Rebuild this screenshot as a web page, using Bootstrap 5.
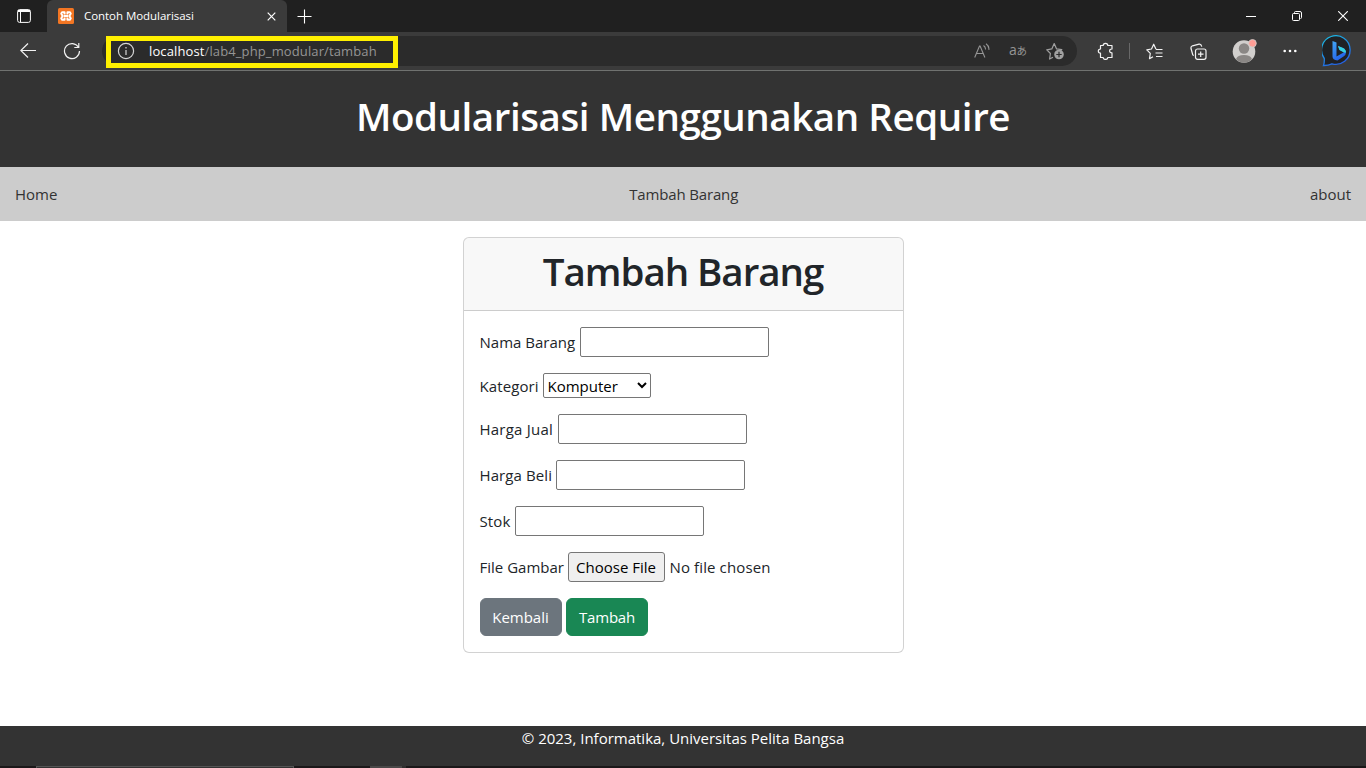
<!DOCTYPE html>
<html lang="id">
<head>
<meta charset="utf-8">
<meta name="viewport" content="width=device-width, initial-scale=1">
<title>Contoh Modularisasi</title>
<link href="https://cdn.jsdelivr.net/npm/bootstrap@5.3.0/dist/css/bootstrap.min.css" rel="stylesheet">
<style>
body{font-family:"Open Sans","Noto Sans",sans-serif;font-size:15px;line-height:24px;height:768px;overflow:hidden;color:#212529}
svg{display:block;flex:none}
.tabstrip{height:32px;background:#202020}
.tab-left{width:47px;padding-left:17px}
.tab-on{width:240px;height:32px;background:#3b3b3b;border-radius:6px 6px 0 0;padding:0 11px;color:#fff;font-size:11.5px}
.tab-title{margin-left:10px;letter-spacing:-.05px}
.tab-add{margin-left:10px}
.win-btns{padding-right:18px;gap:36px}
.toolbar{height:39px;background:#3b3b3b;border-bottom:1px solid #707270}
.ic-back{margin-left:20px}
.ic-reload{margin-left:27px}
.address{width:975px;height:30px;margin-left:21px;background:#2b2b2b;border-radius:15px;font-size:13px;color:#959595}
.marked{width:292px;height:32px;margin-left:4px;border:5px solid #fff000;padding:0 0 2px 6px}
.url{margin-left:14px;letter-spacing:.12px}
.url b{font-weight:400;color:#fff}
.translate{margin-left:19px;width:20px;font-size:14px;line-height:20px;letter-spacing:-.3px;white-space:nowrap;padding-bottom:2px}
.translate small{font-family:"Noto Sans CJK JP",sans-serif;font-size:10.5px}
.ic-fav{margin:0 12px 0 17px}
.ic-ext{margin-left:20px}
.divide{width:1px;height:16px;margin:0 16px 0 15px;background:#686868}
.ic-gap{margin-left:27px}
.ic-user{margin-left:25px}
.ic-more{margin-left:26px}
.ic-bing{margin-left:25px}
.site-head{height:96px;background:#333;color:#fff;padding-top:21px}
h1{font-size:38.5px;line-height:48px;font-weight:600}
.site-head h1{letter-spacing:-.43px}
.site-nav{height:54px;background:#ccc;padding:0 15px}
.site-nav a{color:#333;text-decoration:none}
.nav-mid{letter-spacing:-.15px}
.form-box{width:441px;height:416px;margin:16px auto 0}
.form-box .card-header{height:73px;padding-top:9px}
.card-header h1{letter-spacing:-1.050px}
.line-field{gap:4px;white-space:nowrap}
.w-nama{width:96px}.w-kat{width:59px;letter-spacing:.1px}.w-jual{width:74px;letter-spacing:.22px}.w-beli{width:72px;letter-spacing:.1px}.w-stok{width:31px;letter-spacing:.1px}.w-file{width:84px}
.none-yet{margin-left:1px;letter-spacing:.12px}
.line-field input{width:189px;height:30px;border:1px solid #767676;border-radius:2px}
.line-field select{width:108px;height:25px;border:1px solid #767676;border-radius:2px;background:#fff;color:#000;padding:0}
.pick{width:97px;height:30px;background:#efefef;border:1px solid #767676;border-radius:3px;color:#000;padding:0}
.form-box .btn{width:82px;height:38px;padding:0;font-size:15px;border-radius:6px}
.form-box .btn-success{padding-left:1px;letter-spacing:-.2px}
.site-foot{height:40px;background:#333;color:#fff}
.desk{height:2px;background:#1b1819;padding-left:36px}
.desk-a{width:258px;border:1px solid #555;border-bottom:0;background:#333}
.desk-b{width:32px;margin-left:76px;background:#4a4848}
.desk-c{width:4px;background:#302e2e}
</style>
</head>
<body class="d-flex flex-column">
<div class="tabstrip d-flex align-items-center">
  <div class="tab-left"><svg width="14" height="14" viewBox="0 0 14 14" fill="none" stroke="#fff"><rect x=".6" y=".6" width="12.800" height="12.800" rx="2"/><path d="M1 2h12" stroke-width="2"/><path d="M3.500 3v10"/></svg></div>
  <div class="tab-on d-flex align-items-center">
    <svg width="16" height="16" viewBox="0 0 16 16"><rect width="16" height="16" rx="1.500" fill="#f37623"/><path d="M6.600 6.500V4.200H4.200L3.200 5.500 4.600 8 3.200 10.500 4.200 11.800H6.600V9.500M9.400 6.500V4.200H11.800L12.800 5.500 11.400 8 12.800 10.500 11.800 11.800H9.400V9.500M5.800 8H10.200" fill="none" stroke="#fff" stroke-width="1.900" stroke-linejoin="round"/></svg>
    <span class="tab-title">Contoh Modularisasi</span>
    <svg class="ms-auto" width="9" height="9" viewBox="0 0 9 9" stroke="#fff" stroke-width="1.200"><path d="M.7.7l7.600 7.600M8.300.7L.7 8.300"/></svg>
  </div>
  <svg class="tab-add" width="15" height="15" viewBox="0 0 15 15" stroke="#fff" stroke-width="1.100"><path d="M7.500 .5v14M.5 7.500h14"/></svg>
  <div class="win-btns ms-auto d-flex align-items-center">
    <svg width="10" height="10" viewBox="0 0 10 10" stroke="#fff"><path d="M0 5.500h10"/></svg>
    <svg width="10" height="10" viewBox="0 0 10 10" fill="none" stroke="#fff"><rect x=".5" y="2.500" width="7" height="7" rx="1"/><path d="M2.500 2V1.500q0-1 1-1H8q1.500 0 1.500 1.500v4.500q0 1-1 1"/></svg>
    <svg width="10" height="10" viewBox="0 0 10 10" stroke="#fff" stroke-width="1.100"><path d="M.2.2l9.600 9.600M9.800.2L.2 9.800"/></svg>
  </div>
</div>
<div class="toolbar d-flex align-items-center">
  <svg class="ic-back" width="16" height="16" viewBox="0 0 16 16" fill="none" stroke="#f2f2f2" stroke-width="1.200"><path d="M16 7.500H1M8 .5L.8 7.500 8 14.500"/></svg>
  <svg class="ic-reload" width="18" height="18" viewBox="0 0 18 18" fill="none" stroke="#f2f2f2" stroke-width="1.200"><path d="M15.500 5.300A7.500 7.500 0 1 0 16.500 9M15.800 1v4.500h-4.500"/></svg>
  <div class="address d-flex align-items-center">
    <div class="marked d-flex align-items-center align-self-start">
      <svg width="18" height="18" viewBox="0 0 18 18" fill="none" stroke="#d5d5d5" stroke-width="1.200"><circle cx="9" cy="9" r="7.600"/><path d="M9 8v5M9 5v1.500"/></svg>
      <span class="url"><b>localhost</b>/lab4_php_modular/tambah</span>
    </div>
    <svg class="ms-auto" width="16" height="16" viewBox="0 0 16 16" fill="none" stroke="#959595" stroke-width="1.100"><path d="M.7 14.500L5.500 3h.6l4.800 11.500M2.300 10.500h7M9.500 2.500q2.200 1.500 2 4M12 .8q3.500 2.500 2.800 6"/></svg>
    <span class="translate">a<small>あ</small></span>
    <svg class="ic-fav" width="19" height="18" viewBox="0 0 19 18" fill="none" stroke="#a0a0a0" stroke-width="1.200" stroke-linejoin="round"><path d="M7 15.200L3.600 17l.8-5.500L.8 7.800l5-.9L8.200 1.500l2.400 5.400 5.200.7-1.500 1.600"/><circle cx="13" cy="12.500" r="4.800" fill="#a0a0a0" stroke="none"/><path d="M13 9.800v5.400M10.300 12.500h5.400" stroke="#2b2b2b"/></svg>
  </div>
  <svg class="ic-ext" width="17" height="18" viewBox="0 0 17 18" fill="none" stroke="#f2f2f2" stroke-width="1.200" stroke-linejoin="round"><path d="M3.500 3.500h2.700C6.200.6 10.800.6 10.800 3.500H15V7c-3.200-.2-3.200 4 0 3.800v4.700h-4.200c0 2.600-4.600 2.600-4.600 0H3.500v-4.300C.6 11.200.6 7 3.500 7Z"/></svg>
  <span class="divide"></span>
  <svg width="17" height="17" viewBox="0 0 17 17" fill="none" stroke="#f2f2f2" stroke-width="1.200" stroke-linejoin="round"><path d="M10 6.200L7.700 1.200 5.500 6 .8 6.800l3.500 3.500-.8 5.400L7 13.800M10 6.500h6.500M9.500 10h7M10 13.500h6.500"/></svg>
  <svg class="ic-gap" width="17" height="17" viewBox="0 0 17 17" fill="none" stroke="#f2f2f2" stroke-width="1.200"><rect x="5.500" y="6" width="10.500" height="10.300" rx="2"/><path d="M10.700 8.500v5.500M8 11.200h5.500M3.800 12.500Q3 12.500 2.700 11.500L1 5.500Q.6 3.500 2.500 2.800L9 1.200q2-.5 2.800 2.500"/></svg>
  <svg class="ic-user" width="25" height="25" viewBox="0 0 25 25"><circle cx="12" cy="12.500" r="11.300" fill="#d1cfcd"/><circle cx="12" cy="9.500" r="5.200" fill="#8a8785"/><path d="M4 20q1.500-4 8-4t8 4q-3 3.800-8 3.800t-8-3.800" fill="#8a8785"/><circle cx="20.500" cy="4.300" r="3.800" fill="#ff9e96" stroke="#d1cfcd" stroke-width=".8"/></svg>
  <svg class="ic-more" width="14" height="4" viewBox="0 0 14 4" fill="#fff"><circle cx="1.700" cy="2" r="1.300"/><circle cx="7" cy="2" r="1.300"/><circle cx="12.300" cy="2" r="1.300"/></svg>
  <svg class="ic-bing" width="32" height="32" viewBox="0 0 32 32"><defs><linearGradient id="ring" x1="0" y1="0" x2=".5" y2="1"><stop stop-color="#1ac0e0"/><stop offset="1" stop-color="#2463e4"/></linearGradient><linearGradient id="bee" x1="0" y1="0" x2=".5" y2="1"><stop stop-color="#42a5f5"/><stop offset="1" stop-color="#2462e9"/></linearGradient></defs><path d="M1.500 30.500q1-2 .8-7A14.300 14.300 0 1 1 10 28.800Q6 30.600 1.500 30.500Z" fill="#202124" stroke="url(#ring)" stroke-width="1.300"/><path d="M10.500 6l4 1.500v14L22 17.300 17.500 15 16 11l5 2q3 1.500 3 4.500 0 2.500-2.500 4l-6 4q-5-.5-5-4Z" fill="url(#bee)"/><path d="M16 11l5 2q3 1.500 3 4.500l-2 0-4.500-2.500Z" fill="#35d2df"/></svg>
</div>
<header class="site-head text-center"><h1 class="mb-0">Modularisasi Menggunakan Require</h1></header>
<nav class="site-nav d-flex justify-content-between align-items-center"><a href="#">Home</a><a class="nav-mid" href="#">Tambah Barang</a><a href="#">about</a></nav>
<main class="flex-grow-1">
  <div class="card form-box">
    <div class="card-header text-center"><h1 class="mb-0">Tambah Barang</h1></div>
    <div class="card-body d-flex flex-column gap-3">
      <div class="line-field d-flex align-items-center"><label class="w-nama" for="nama">Nama Barang</label><input id="nama" type="text"></div>
      <div class="line-field d-flex align-items-center"><label class="w-kat" for="kat">Kategori</label><select id="kat"><option>Komputer</option></select></div>
      <div class="line-field d-flex align-items-center"><label class="w-jual" for="jual">Harga Jual</label><input id="jual" type="text"></div>
      <div class="line-field d-flex align-items-center"><label class="w-beli" for="beli">Harga Beli</label><input id="beli" type="text"></div>
      <div class="line-field d-flex align-items-center"><label class="w-stok" for="stok">Stok</label><input id="stok" type="text"></div>
      <div class="line-field d-flex align-items-center"><label class="w-file">File Gambar</label><button type="button" class="pick">Choose File</button><span class="none-yet">No file chosen</span></div>
      <div class="line-field d-flex"><button type="button" class="btn btn-secondary">Kembali</button><button type="button" class="btn btn-success">Tambah</button></div>
    </div>
  </div>
</main>
<footer class="site-foot text-center">© 2023, Informatika, Universitas Pelita Bangsa</footer>
<div class="desk d-flex"><span class="desk-a"></span><span class="desk-b"></span><span class="desk-c"></span></div>
<script src="https://cdn.jsdelivr.net/npm/bootstrap@5.3.0/dist/js/bootstrap.bundle.min.js"></script>
</body>
</html>
